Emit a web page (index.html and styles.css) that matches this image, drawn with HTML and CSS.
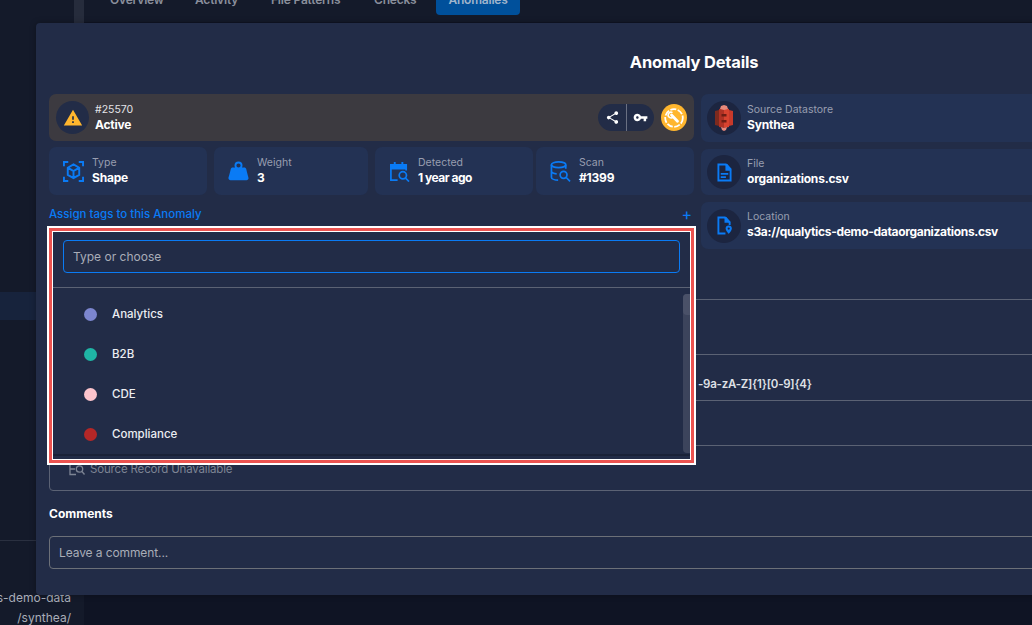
FILE: index.html
```html
<!DOCTYPE html>
<html lang="en">
<head>
    <meta charset="UTF-8">
    <meta name="viewport" content="width=device-width, initial-scale=1.0">
    <title>Anomaly Details</title>
    <link rel="stylesheet" href="styles.css">
</head>
<body>
    <div class="page">
        <!-- page behind the modal -->
        <div class="side">
            <div class="side-row"></div>
            <div class="side-line"></div>
            <div class="side-path">s-demo-data</div>
            <div class="side-path">/synthea/</div>
        </div>
        <div class="rail"></div>
        <div class="main">
            <div class="tabs">
                <span class="tab">Overview</span>
                <span class="tab">Activity</span>
                <span class="tab">File Patterns</span>
                <span class="tab">Checks</span>
                <span class="tab tab-active">Anomalies</span>
            </div>
        </div>

        <div class="modal">
            <h2 class="modal-title">Anomaly Details</h2>
            <div class="top-grid">
                <div class="left-col">
                    <div class="status-card">
                        <div class="circle">
                            <svg class="icon-warn" viewBox="0 0 24 24"><path d="M13 14H11V10H13M13 18H11V16H13M1 21H23L12 2L1 21Z"/></svg>
                        </div>
                        <div class="status-text">
                            <div class="status-id">#25570</div>
                            <div class="value">Active</div>
                        </div>
                        <div class="actions">
                            <button class="action">
                                <svg viewBox="0 0 24 24"><path d="M18 16.08c-.76 0-1.44.3-1.96.77L8.91 12.7c.05-.23.09-.46.09-.7s-.04-.47-.09-.7l7.05-4.11c.54.5 1.25.81 2.04.81 1.66 0 3-1.34 3-3s-1.34-3-3-3-3 1.34-3 3c0 .24.04.47.09.7L8.04 9.81C7.5 9.31 6.79 9 6 9c-1.66 0-3 1.34-3 3s1.34 3 3 3c.79 0 1.5-.31 2.04-.81l7.12 4.16c-.05.21-.08.43-.08.65 0 1.61 1.31 2.92 2.92 2.92s2.92-1.31 2.92-2.92-1.31-2.92-2.92-2.92z"/></svg>
                            </button>
                            <button class="action action-key">
                                <svg viewBox="0 0 24 24"><path d="M12.65 10C11.83 7.67 9.61 6 7 6c-3.31 0-6 2.69-6 6s2.69 6 6 6c2.61 0 4.83-1.67 5.65-4H17v4h4v-4h2v-4H12.65zM7 14c-1.1 0-2-.9-2-2s.9-2 2-2 2 .9 2 2-.9 2-2 2z"/></svg>
                            </button>
                        </div>
                        <div class="fix-badge">
                            <svg viewBox="0 0 26 26" fill="none" stroke="#fff">
                                <circle cx="13" cy="13.500" r="8.800" stroke-width="1.800" stroke-dasharray="6 1.500"/>
                                <path d="M10.500 10.500l6 6.200" stroke-width="2.800" stroke-linecap="round"/>
                                <path d="M11.500 8.200a2.800 2.800 0 1 0 .8 4" stroke-width="1.500"/>
                            </svg>
                        </div>
                    </div>

                    <div class="stats">
                        <div class="card stat">
                            <svg class="blue-icon" viewBox="0 0 22 22" fill="none" stroke="#0a7bf5" stroke-width="2">
                                <path d="M1 5.500V1H5.500M16.500 1H21V5.500M21 16.500V21H16.500M5.500 21H1V16.500"/>
                                <path d="M11 3.500l6 3.500v7.500L11 18l-6-3.500V7zM5 7l6 3.500L17 7M11 10.500V18"/>
                            </svg>
                            <div><div class="label">Type</div><div class="value">Shape</div></div>
                        </div>
                        <div class="card stat stat-narrow">
                            <svg class="blue-icon" viewBox="0 0 22 22"><path fill="#0a7bf5" d="M11 0.500a4.200 4.200 0 0 1 4.200 4.200c0 .8-.2 1.500-.6 2.200h2.500c1 0 1.800.7 2 1.600 2 8.400 2.400 9 2.400 9.600 0 1.100-.9 2-2 2H2.500c-1.100 0-2-.9-2-2 0-.6.400-1.200 2.400-9.600.2-.9 1-1.600 2-1.600h2.500a4.200 4.200 0 0 1-.6-2.200A4.200 4.200 0 0 1 11 .5m0 2a2.200 2.200 0 1 0 0 4.400 2.200 2.200 0 0 0 0-4.400Z"/></svg>
                            <div><div class="label">Weight</div><div class="value">3</div></div>
                        </div>
                        <div class="card stat">
                            <svg class="blue-icon" viewBox="0 0 22 22" fill="none" stroke="#0a7bf5" stroke-width="1.800">
                                <path d="M9 20H2V4h16v6" />
                                <path fill="#0a7bf5" d="M2 4h16v4H2z"/>
                                <path d="M6 1v3M14 1v3" stroke-width="2"/>
                                <circle cx="14.500" cy="15" r="3.800"/>
                                <path d="M17.300 18l3.700 3.500"/>
                            </svg>
                            <div><div class="label">Detected</div><div class="value value-tight">1 year ago</div></div>
                        </div>
                        <div class="card stat stat-tight">
                            <svg class="blue-icon" viewBox="0 0 22 22" fill="none" stroke="#0a7bf5" stroke-width="1.800">
                                <ellipse cx="9" cy="4" rx="7.500" ry="3"/>
                                <path d="M1.500 4v13c0 1.800 3.500 3 7 3M16.500 4v4M1.500 10.500c0 1.500 2.500 2.700 5.500 2.900"/>
                                <circle cx="14.200" cy="14.500" r="3.600"/>
                                <path d="M17 17.300l4 4"/>
                            </svg>
                            <div><div class="label">Scan</div><div class="value">#1399</div></div>
                        </div>
                    </div>

                    <div class="assign-row">
                        <span>Assign tags to this Anomaly</span>
                        <span class="plus">+</span>
                    </div>
                </div>

                <div class="right-col">
                    <div class="card info info-first">
                        <div class="circle">
                            <svg class="icon-s3" viewBox="0 0 18 28">
                                <path fill="#7d2a1e" d="M0 7l4-1v16l-4-1z"/>
                                <path fill="#c8392a" d="M18 7l-4-1v16l4-1z"/>
                                <path fill="#b03224" d="M4 5l5-1v20l-5-1z"/>
                                <path fill="#d9432f" d="M14 5l-5-1v20l5-1z"/>
                                <path fill="#e8897b" d="M6 2l3-1 3 1 1 3-4 1-4-1zM6 23l3 1 3-1-1 3-2 1-2-1z"/>
                                <path fill="#6e1e14" d="M6.500 10h5v2.500h-5zM6.500 16h5v2.500h-5z"/>
                            </svg>
                        </div>
                        <div><div class="label">Source Datastore</div><div class="value">Synthea</div></div>
                    </div>
                    <div class="card info info-file">
                        <div class="circle">
                            <svg class="icon-file" viewBox="0 0 16 20"><path fill="none" stroke="#0a7bf5" stroke-width="2" d="M1.500 1.500h8l5 5v12h-13z"/><path fill="#0a7bf5" d="M9 1h2l4 5v2H9zM4 10.500h8v1.800H4zM4 14h5.500v1.800H4z"/></svg>
                        </div>
                        <div><div class="label">File</div><div class="value">organizations.csv</div></div>
                    </div>
                    <div class="card info info-last">
                        <div class="circle">
                            <svg class="icon-file" viewBox="0 0 16 20"><path fill="none" stroke="#0a7bf5" stroke-width="2" d="M9 18.500H1.500v-17h7l5 5v3"/><path fill="#0a7bf5" d="M8 1h2l4 5v1H8z"/><path fill="#0a7bf5" d="M12.500 10a3.300 3.300 0 0 1 3.300 3.300c0 2.300-3.300 5.700-3.300 5.700s-3.300-3.400-3.300-5.700a3.300 3.300 0 0 1 3.300-3.300z"/><circle cx="12.500" cy="13.300" r="1.200" fill="#1c2540"/></svg>
                        </div>
                        <div class="info-text"><div class="label">Location</div><div class="value value-long">s3a://qualytics-demo-dataorganizations.csv</div></div>
                    </div>
                </div>
            </div>

            <div class="rows">
                <div class="row row-tall"></div>
                <div class="row row-code">-9a-zA-Z]{1}[0-9]{4}</div>
                <div class="row"></div>
                <div class="row row-source">
                    <svg class="icon-source" viewBox="0 0 16 14" fill="none" stroke="#7d8494" stroke-width="1.300">
                        <path d="M7 1.500H1v11h6M1 7h5"/>
                        <circle cx="10.500" cy="7" r="3.200"/>
                        <path d="M13 9.500l2.500 3"/>
                    </svg>
                    Source Record Unavailable
                </div>
            </div>

            <div class="comments-label">Comments</div>
            <div class="comment-input">Leave a comment...</div>

            <!-- open tag dropdown, with the red highlight round it -->
            <div class="highlight">
                <div class="dropdown">
                    <div class="search-wrap">
                        <div class="search">Type or choose</div>
                    </div>
                    <div class="options">
                        <div class="option-list">
                            <div class="option"><span class="dot dot-analytics"></span>Analytics</div>
                            <div class="option"><span class="dot dot-b2b"></span>B2B</div>
                            <div class="option"><span class="dot dot-cde"></span>CDE</div>
                            <div class="option"><span class="dot dot-compliance"></span>Compliance</div>
                        </div>
                        <div class="scrollbar"><div class="thumb"></div></div>
                    </div>
                </div>
            </div>
        </div>
    </div>
</body>
</html>
```

FILE: styles.css
```css
* {
    box-sizing: border-box;
}
body {
    margin: 0;
    background: #0f1424;
    font-family: 'Inter', sans-serif;
    overflow: hidden;
}
.page {
    position: relative;
    display: flex;
    width: 1032px;
    height: 625px;
    overflow: hidden;
    background: #0f1424;
}

/* backdrop */
.side {
    width: 74px;
    flex: none;
    background: #141a2a;
    overflow: hidden;
}
.side-row {
    margin-top: 292px;
    height: 28px;
    background: #17233c;
}
.side-line {
    margin-top: 220px;
    height: 1px;
    background: #2a3040;
}
.side-path {
    display: flex;
    justify-content: flex-end;
    padding-right: 3px;
    height: 20px;
    line-height: 20px;
    font-size: 12px;
    white-space: nowrap;
    color: #a9adb8;
}
.side-line + .side-path {
    margin-top: 47px;
}
.rail {
    width: 10px;
    flex: none;
    background: linear-gradient(#262c3c 24px, #141a2a 24px);
}
.main {
    flex: 1;
    background: #0f1424;
}
.tabs {
    display: flex;
    height: 22px;
    background: #141a2a;
    padding-left: 26px;
    font-size: 12px;
    font-weight: 600;
    letter-spacing: -0.2px;
    color: #8a8f9c;
}
.tab {
    width: 85px;
    margin-top: -7px;
    height: 22px;
    line-height: 14px;
}
.tab:nth-child(2) {
    width: 76px;
}
.tab:nth-child(3) {
    width: 103px;
}
.tab:nth-child(4) {
    width: 62px;
}
.tab-active {
    width: 84px;
    text-align: center;
    background: #00509b;
    border-radius: 0 0 4px 4px;
    color: #9fb4cc;
}

/* modal */
.modal {
    position: absolute;
    left: 36px;
    top: 23px;
    width: 1316px;
    height: 572px;
    padding: 0 13px;
    background: #222c47;
    border-radius: 4px;
    box-shadow: 0 0 6px rgba(0, 0, 0, 0.3);
    color: #fff;
}
.modal-title {
    margin: 0;
    height: 71px;
    padding-top: 28px;
    line-height: 22px;
    text-align: center;
    font-size: 16.5px;
    font-weight: 700;
    letter-spacing: -0.2px;
}
.top-grid {
    display: grid;
    grid-template-columns: 645px 638px;
    column-gap: 7px;
    height: 155px;
}
.card {
    display: flex;
    align-items: center;
    background: #233254;
    border-radius: 7px;
}
.circle {
    display: flex;
    align-items: center;
    justify-content: center;
    width: 34px;
    height: 34px;
    flex: none;
    border-radius: 50%;
    background: #1c2540;
}
.label {
    font-size: 10.5px;
    line-height: 15px;
    margin-top: -1px;
    color: #989eb0;
}
.value {
    font-size: 12px;
    line-height: 16px;
    font-weight: 700;
    letter-spacing: -0.2px;
    color: #fff;
}
.value-tight {
    letter-spacing: -0.5px;
}
.value-long {
    letter-spacing: -0.32px;
}

/* left column */
.status-card {
    display: flex;
    align-items: center;
    height: 47px;
    padding: 0 7px;
    background: #3c3a40;
    border-radius: 7px;
}
.status-card .circle {
    width: 33px;
    height: 33px;
    background: #222c47;
}
.icon-warn {
    width: 20px;
    height: 20px;
    fill: #ffb62e;
}
.status-text {
    margin-left: 6px;
    flex: 1;
}
.status-id {
    font-size: 10.5px;
    line-height: 15px;
    color: #e4e4e8;
}
.actions {
    display: flex;
    height: 27px;
    border-radius: 14px;
    background: #222c47;
    overflow: hidden;
}
.action {
    display: flex;
    align-items: center;
    justify-content: center;
    width: 28px;
    padding: 0;
    border: none;
    background: none;
}
.action svg {
    width: 15px;
    height: 15px;
    fill: #fff;
}
.action-key {
    border-left: 1px solid #6a7082;
}
.fix-badge {
    width: 26px;
    height: 27px;
    margin-left: 7px;
    border-radius: 50%;
    background: #ffb62e;
}
.fix-badge svg {
    display: block;
    width: 26px;
    height: 27px;
}
.stats {
    display: flex;
    gap: 7px;
    margin-top: 6px;
}
.stat {
    width: 158px;
    height: 48px;
    padding-left: 14px;
    gap: 8px;
}
.stat-narrow {
    width: 154px;
}
.stat-tight {
    margin-left: -4px;
}
.blue-icon {
    width: 21px;
    height: 21px;
    flex: none;
}
.assign-row {
    display: flex;
    justify-content: space-between;
    align-items: center;
    margin-top: 10px;
    height: 17px;
    padding-right: 2px;
    font-size: 11.5px;
    font-weight: 500;
    color: #0a7bf5;
}
.plus {
    font-size: 16px;
    font-weight: 400;
}

/* right column */
.right-col {
    display: flex;
    flex-direction: column;
    gap: 7px;
}
.info {
    height: 47px;
    padding-left: 6px;
    gap: 6px;
}
.info-first {
    height: 48px;
}
.info-file {
    height: 46px;
}
.info-text {
    margin-top: -2px;
}
.icon-s3 {
    width: 18px;
    height: 28px;
}
.icon-file {
    width: 15px;
    height: 19px;
}

/* rows under the dropdown */
.rows {
    margin-top: 50px;
}
.row {
    height: 46px;
    margin-top: -1px;
    border: 1px solid #5b6274;
    border-radius: 4px;
}
.row:first-child {
    margin-top: 0;
}
.row-tall {
    height: 56px;
}
.row-code {
    height: 47px;
    padding: 21px 0 0 648px;
    line-height: 16px;
    font-size: 11.5px;
    font-weight: 600;
    letter-spacing: -0.25px;
    color: #dfe1e6;
}
.row-source {
    display: flex;
    align-items: center;
    padding: 2px 0 0 19px;
    gap: 5px;
    font-size: 11.5px;
    letter-spacing: -0.17px;
    color: #7d8494;
}
.icon-source {
    width: 16px;
    height: 14px;
}
.comments-label {
    margin-top: 15px;
    height: 16px;
    line-height: 16px;
    font-size: 12px;
    font-weight: 700;
}
.comment-input {
    margin-top: 14px;
    height: 33px;
    padding-left: 9px;
    line-height: 31px;
    border: 1px solid #6c7078;
    border-radius: 4px;
    font-size: 12px;
    letter-spacing: -0.1px;
    color: #a9adb8;
}

/* dropdown */
.highlight {
    position: absolute;
    left: 13px;
    top: 205px;
    width: 645px;
    height: 235px;
    border: 3px solid #ec5350;
    box-shadow: 0 0 0 2px #fff, inset 0 0 0 1px #fff;
    padding: 1px;
}
.dropdown {
    height: 100%;
    background: #222c47;
}
.search-wrap {
    height: 56px;
    padding: 8px 10px 0;
    border-bottom: 1px solid #5b6274;
}
.search {
    height: 33px;
    padding-left: 9px;
    line-height: 31px;
    border: 1px solid #0a7bf5;
    border-radius: 4px;
    font-size: 12px;
    color: #a9adb8;
}
.options {
    position: relative;
    height: 168px;
    border-bottom: 2px solid #1a2238;
}
.option-list {
    padding-top: 6px;
}
.option {
    display: flex;
    align-items: center;
    gap: 15px;
    height: 40px;
    padding-left: 31px;
    font-size: 11.5px;
    font-weight: 500;
    color: #eceef2;
}
.dot {
    width: 13px;
    height: 13px;
    border-radius: 50%;
}
.dot-analytics {
    background: #7c86cf;
}
.dot-b2b {
    background: #1fb5a5;
}
.dot-cde {
    background: #fcc4cc;
}
.dot-compliance {
    background: #b52727;
}
.scrollbar {
    position: absolute;
    right: 0;
    top: 6px;
    bottom: 1px;
    width: 7px;
    border-radius: 4px 0 0 4px;
    background: #3c445c;
}
.thumb {
    height: 21px;
    border-radius: 4px 0 0 4px;
    background: #4a5168;
}
```
